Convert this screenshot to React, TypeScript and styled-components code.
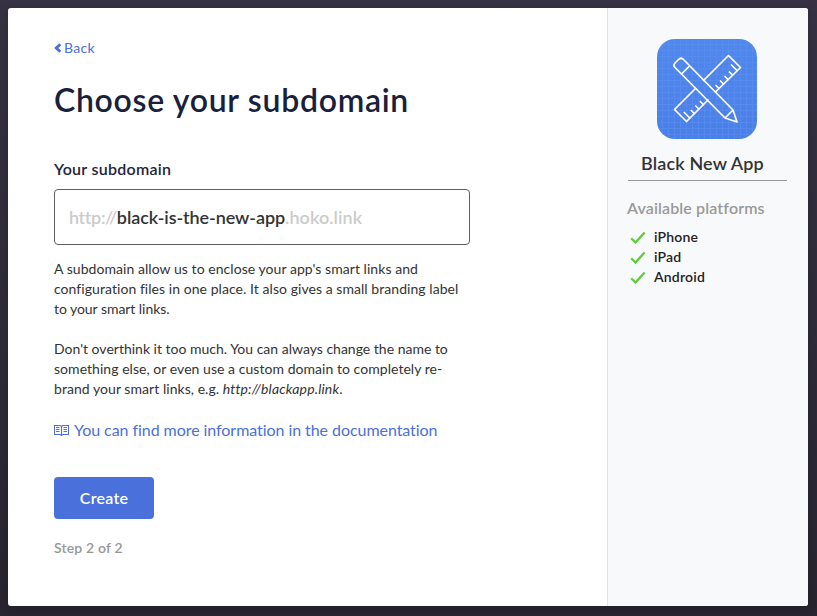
import React from "react";
import styled, { createGlobalStyle } from "styled-components";

const GlobalStyle = createGlobalStyle`
  * { box-sizing: border-box; }
  body {
    margin: 0;
    font-family: Lato, "Open Sans", sans-serif;
    font-size: 14px;
    line-height: 20px;
    color: #333;
    -webkit-font-smoothing: antialiased;
  }
`;

const Page = styled.div`
  width: 817px;
  height: 616px;
  padding: 8px 9px 10px 8px;
  background: linear-gradient(#363243, #282531);
  overflow: hidden;
`;

const Card = styled.div`
  display: flex;
  height: 598px;
  border-radius: 3px;
  overflow: hidden;
  background: #fff;
  box-shadow: 0 2px 8px rgba(0, 0, 0, 0.2);
`;

const Main = styled.main`
  width: 599px;
  padding: 30px 46px 0;
`;

const Sidebar = styled.aside`
  flex: 1;
  padding: 31px 21px 0 19px;
  border-left: 1px solid #dfe2e8;
  background: #f8f9fb;
`;

const Tracked = styled.span<{ $track?: number }>`
  display: inline-block;
  white-space: pre;
  letter-spacing: ${(p) => p.$track ?? 0}px;
`;

const BackLink = styled.a`
  display: flex;
  align-items: center;
  gap: 2px;
  color: #4a70dc;
  letter-spacing: 0.3px;
`;

const Title = styled.h1`
  margin: 22px 0 0;
  color: #1a1f3b;
  font-size: 32px;
  line-height: 40px;
  font-weight: 600;
  letter-spacing: 0.7px;
  white-space: nowrap;
`;

const Label = styled.label`
  display: block;
  margin-top: 39px;
  color: #1f2440;
  font-size: 16px;
  font-weight: 600;
  letter-spacing: 0.27px;
`;

const Field = styled.div`
  display: flex;
  align-items: center;
  width: 416px;
  height: 56px;
  margin-top: 10px;
  padding: 0 14px 1px;
  border: 1px solid #606060;
  border-radius: 4px;
  font-size: 18px;
  font-weight: 600;
`;

const Affix = styled(Tracked)`
  color: #cbcbcb;
`;

const Paragraph = styled.p<{ $top: number }>`
  margin: ${(p) => p.$top}px 0 0;
`;

const DocLink = styled.a`
  display: flex;
  align-items: center;
  gap: 5px;
  margin-top: 21px;
  color: #4a70dc;
  font-size: 16px;
  letter-spacing: -0.06px;
`;

const Button = styled.button`
  display: block;
  width: 100px;
  height: 42px;
  margin: 37px 0 19px;
  padding: 0 0 1px;
  border: 0;
  border-radius: 4px;
  background: #4a70dc;
  color: #fff;
  font: 600 16px/20px Lato, sans-serif;
  letter-spacing: 0.25px;
`;

const Step = styled.div`
  color: #979797;
  font-weight: 600;
  letter-spacing: 0.17px;
`;

const AppIcon = styled.svg`
  display: block;
  margin: 0 auto;
`;

const AppName = styled.div`
  width: 159px;
  height: 31px;
  margin: 11px 0 0 1px;
  padding: 1px 0 0 13px;
  border-bottom: 1px solid #999;
  font-size: 18px;
  line-height: 24px;
  font-weight: 600;
  letter-spacing: 0.15px;
  white-space: nowrap;
`;

const PlatformsTitle = styled.div`
  margin: 17px 0 9px;
  color: #999;
  font-size: 16px;
  font-weight: 600;
  letter-spacing: 0.13px;
  white-space: nowrap;
`;

const Platform = styled.div`
  display: flex;
  align-items: center;
  gap: 8px;
  padding-left: 3px;
  color: #222;
  font-weight: 600;
  letter-spacing: 0.2px;
`;

const Check = () => (
  <svg width="16" height="14" viewBox="0 0 16 14" fill="none" stroke="#5fcb3c" strokeWidth="2.3">
    <path d="M1.2 8.2l4.3 4.3L14.600 2.400" />
  </svg>
);

const App = () => (
  <>
    <GlobalStyle />
    <Page>
      <Card>
        <Main>
          <BackLink>
            <svg width="8" height="10" viewBox="0 0 8 10" fill="none" stroke="#4a70dc" strokeWidth="2.8">
              <path d="M6.3 1.2L2.2 5l4.1 3.8" />
            </svg>
            Back
          </BackLink>
          <Title>Choose your subdomain</Title>
          <Label>Your subdomain</Label>
          <Field>
            <Affix $track={-0.35}>http://</Affix>
            <Tracked $track={-0.08}>black-is-the-new-app</Tracked>
            <Affix $track={0.08}>.hoko.link</Affix>
          </Field>
          <Paragraph $top={14}>
            <Tracked $track={0.055}>A subdomain allow us to enclose your app's smart links and</Tracked>
            <br />
            <Tracked $track={0.055}>configuration files in one place. It also gives a small branding label</Tracked>
            <br />
            <Tracked $track={-0.05}>to your smart links.</Tracked>
          </Paragraph>
          <Paragraph $top={20}>
            <Tracked>Don't overthink it too much. You can always change the name to</Tracked>
            <br />
            <Tracked $track={0.045}>something else, or even use a custom domain to completely re-</Tracked>
            <br />
            <Tracked $track={0.05}>brand your smart links, e.g. </Tracked>
            <Tracked as="em" $track={0.17}>http://blackapp.link</Tracked>.
          </Paragraph>
          <DocLink>
            <svg width="15" height="12" viewBox="0 0 15 12" fill="none" stroke="#4a70dc" strokeWidth="1.1">
              <path d="M.5 1.5H6l1.5.8L9 1.5h5.5v9H9l-1.5.8-1.5-.8H.5zM7.5 2.5v8.500M2 3.500h3.500M2 5.500h3.500M2 7.500h3.500M9.500 3.500H13M9.500 5.500H13M9.500 7.500H13" />
            </svg>
            You can find more information in the documentation
          </DocLink>
          <Button>Create</Button>
          <Step>Step 2 of 2</Step>
        </Main>
        <Sidebar>
          <AppIcon width="100" height="100" viewBox="0 0 100 100">
            <defs>
              <pattern id="grid" width="6" height="6" patternUnits="userSpaceOnUse">
                <path d="M5.5 0v6M0 5.500h6" stroke="#5f91f0" strokeWidth="1" />
              </pattern>
              <linearGradient id="blue" x2="0" y2="1">
                <stop stopColor="#5088ee" />
                <stop offset="1" stopColor="#4a7fe8" />
              </linearGradient>
            </defs>
            <rect width="100" height="100" rx="18" fill="url(#blue)" />
            <rect width="100" height="100" rx="18" fill="url(#grid)" opacity=".5" />
            <g fill="none" stroke="#fff" strokeWidth="1.7" strokeLinejoin="round" strokeLinecap="round">
              <path d="M46.5 41.5L71.500 16.500 83.500 28.500 58.500 53M38.500 49.500L17.500 70.500 29.500 82.500 51 61" />
              <path d="M80 31.500l-5.500-5.500M75.500 36l-3-3M71 40.500l-3-3M66.500 45l-3-3M62 49.500l-3-3M32.800 79l-5.500-5.500M37.300 74.500l-3-3M41.800 70l-3-3M46.300 65.500l-3-3" />
              <path d="M18 28.500c-1.500-1.500-1.500-3 0-4.500l3.500-3.500c1.500-1.500 3.500-1.500 5 0L76 71l4 12-12-4zM24.500 35l8-8M68 79l8-8" />
            </g>
          </AppIcon>
          <AppName>Black New App</AppName>
          <PlatformsTitle>Available platforms</PlatformsTitle>
          {["iPhone", "iPad", "Android"].map((name) => (
            <Platform key={name}>
              <Check />
              {name}
            </Platform>
          ))}
        </Sidebar>
      </Card>
    </Page>
  </>
);

export default App;
